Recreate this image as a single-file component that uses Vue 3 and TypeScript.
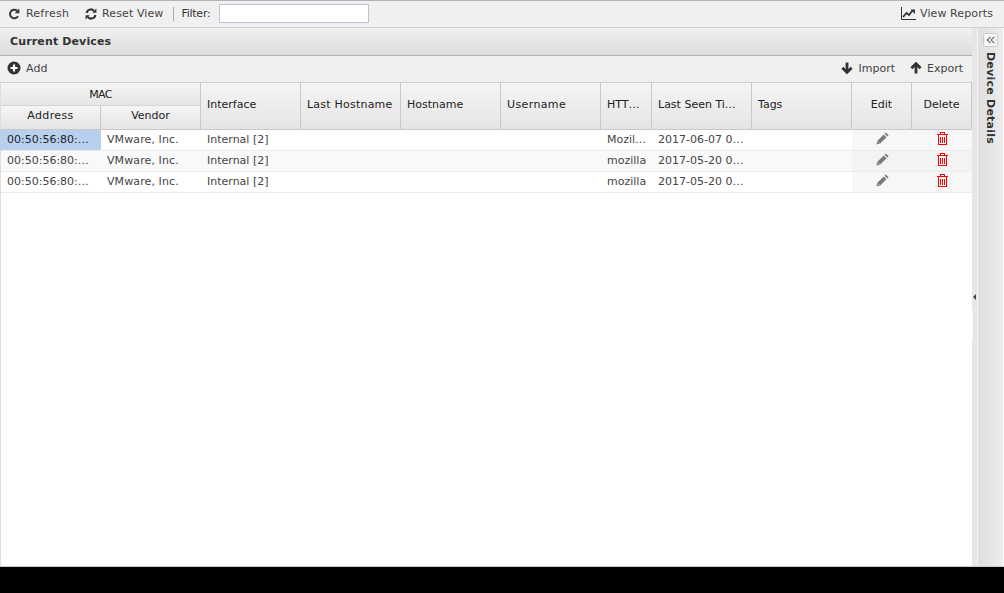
<script setup lang="ts">
interface Row { mac: string; agent: string; seen: string }
const rows: Row[] = [
  { mac: '00:50:56:80:…', agent: 'Mozil…', seen: '2017-06-07 0…' },
  { mac: '00:50:56:80:…', agent: 'mozilla', seen: '2017-05-20 0…' },
  { mac: '00:50:56:80:…', agent: 'mozilla', seen: '2017-05-20 0…' },
]
</script>

<template>
  <div class="page">
    <div class="topbar">
      <button class="tool first">
        <svg width="12" height="12" viewBox="0 0 12 12"><path d="M10 8.2A4.3 4.3 0 1 1 9.2 2.8" fill="none" stroke="#333" stroke-width="2"/><path d="M11.4 .4v4.8H6.6z" fill="#333"/></svg>
        <span class="wide-m">Refresh</span>
      </button>
      <button class="tool reset">
        <svg width="12" height="12" viewBox="0 0 12 12"><path d="M1.6 5A4.3 4.3 0 0 1 9 2.8M10.4 7A4.3 4.3 0 0 1 3 9.2" fill="none" stroke="#333" stroke-width="2"/><path d="M11.4 .6v4.2H7.2zM.6 11.4V7.2h4.2z" fill="#333"/></svg>
        <span class="wide-s">Reset View</span>
      </button>
      <i class="sep"></i>
      <label class="filter">Filter:</label>
      <input class="filter-input" />
      <button class="tool reports">
        <svg width="15" height="13" viewBox="0 0 15 13"><path d="M.5 0v12.5H15" fill="none" stroke="#333"/><path d="M2 10l3.5-4 2.5 2 3.5-4.5" fill="none" stroke="#333" stroke-width="1.8"/><path d="M9.5 2.5H14V7z" fill="#333"/></svg>
        <span class="wide-s">View Reports</span>
      </button>
    </div>

    <div class="workspace">
      <section class="main">
        <h1 class="title">Current Devices</h1>
        <div class="actions">
          <button class="tool add">
            <svg width="14" height="14" viewBox="0 0 14 14"><circle cx="7" cy="7" r="6.5" fill="#333"/><path d="M7 3.5v7M3.5 7h7" stroke="#fff" stroke-width="2.2"/></svg>
            <span class="wide-s">Add</span>
          </button>
          <button class="tool import">
            <svg width="12" height="12" viewBox="0 0 12 12"><path d="M6 .5v9.5M1.4 5.8 6 10.4l4.6-4.6" fill="none" stroke="#333" stroke-width="2.8"/></svg>
            <span>Import</span>
          </button>
          <button class="tool export">
            <svg width="12" height="12" viewBox="0 0 12 12"><path d="M6 11.5V2M1.4 6.2 6 1.6l4.6 4.6" fill="none" stroke="#333" stroke-width="2.8"/></svg>
            <span>Export</span>
          </button>
        </div>

        <div class="grid head">
          <div class="hc mac"><span class="narrow">MAC</span></div>
          <div class="hc address"><span class="wide-l">Address</span></div>
          <div class="hc vendor">Vendor</div>
          <div class="hc tall left">Interface</div>
          <div class="hc tall left"><span class="wide-m">Last Hostname</span></div>
          <div class="hc tall left">Hostname</div>
          <div class="hc tall left"><span class="wide-l">Username</span></div>
          <div class="hc tall left">HTT…</div>
          <div class="hc tall left">Last Seen Ti…</div>
          <div class="hc tall left">Tags</div>
          <div class="hc tall">Edit</div>
          <div class="hc tall">Delete</div>
        </div>

        <div v-for="(row, i) in rows" :key="i" class="grid row" :class="{ alt: i === 1 }">
          <div class="cell" :class="{ selected: i === 0 }">{{ row.mac }}</div>
          <div class="cell"><span class="wide-s">VMware, Inc.</span></div>
          <div class="cell">Internal [2]</div>
          <div class="cell"></div>
          <div class="cell"></div>
          <div class="cell"></div>
          <div class="cell">{{ row.agent }}</div>
          <div class="cell">{{ row.seen }}</div>
          <div class="cell"></div>
          <div class="cell icon">
            <svg width="13" height="13" viewBox="0 0 13 13"><path d="M9.8.4l2.8 2.8-1.3 1.3-2.8-2.8zM7.7 2.5l2.8 2.8-6.3 6.3-3.8 1 1-3.8z" fill="#7a7a7a"/><path d="M1.8 9.6l1.6 1.6" stroke="#ddd" stroke-width=".8"/></svg>
          </div>
          <div class="cell icon">
            <svg class="trash" width="11" height="13" viewBox="0 0 11 13" shape-rendering="crispEdges"><path class="trash-line" d="M0 2.5h11M3.5 2.5v-2h4v2M1.5 2.5v10h8v-10M3.5 5v5.5M5.5 5v5.5M7.5 5v5.5"/></svg>
          </div>
        </div>
      </section>

      <div class="splitter"><span class="handle"></span></div>

      <aside class="side">
        <button class="collapse">
          <svg width="9" height="8" viewBox="0 0 9 8"><path d="M4.5.8 1.3 4l3.2 3.2M8.2.8 5 4l3.2 3.2" fill="none" stroke="#666" stroke-width="1.1"/></svg>
        </button>
        <div class="side-title">Device Details</div>
      </aside>
    </div>
    <div class="footer"></div>
  </div>
</template>

<style>
html, body { margin: 0; background: #000; }
</style>

<style scoped>
.page {
  width: 1004px;
  height: 593px;
  display: flex;
  flex-direction: column;
  font: 11px "DejaVu Sans", sans-serif;
  color: #444;
  overflow: hidden;
  background: #000;
}
button { all: unset; box-sizing: border-box; }
.wide-s { letter-spacing: .1px; }
.wide-m { letter-spacing: .22px; }
.wide-l { letter-spacing: .38px; }
.narrow { letter-spacing: -.6px; }
.tool { display: flex; align-items: center; gap: 6px; color: #444; font-size: 11px; white-space: nowrap; }
.topbar {
  height: 28px;
  box-sizing: border-box;
  flex: none;
  display: flex;
  align-items: center;
  background: #f0f0f0;
  border-top: 1px solid #b8b0b0;
  border-bottom: 1px solid #cfcfcf;
  padding: 0 11px 1px 8px;
}
.reset { margin-left: 16px; gap: 5px; }
.sep { width: 1px; height: 14px; background: #aaa; margin: 0 7px 0 10px; }
.filter { color: #333; letter-spacing: -.25px; }
.filter-input {
  width: 150px;
  height: 19px;
  box-sizing: border-box;
  margin-left: 9px;
  border: 1px solid #bcc5d8;
  background: #fff;
  padding: 0;
  outline: none;
}
.reports { margin-left: auto; gap: 4px; }
.workspace { flex: none; height: 538px; display: flex; background: #fff; border-bottom: 1px solid #ccc; }
.main { width: 972px; box-sizing: border-box; background: #fff; border-left: 1px solid #ddd; }
.title {
  margin: 0 0 0 -1px;
  height: 28px;
  box-sizing: border-box;
  border-bottom: 1px solid #b8b0b0;
  background: linear-gradient(#f1f1f1, #dcdcdc);
  font-size: 11px;
  font-weight: bold;
  letter-spacing: .14px;
  color: #333;
  padding: 0 0 0 10px;
  line-height: 27px;
}
.actions {
  margin-left: -1px;
  height: 27px;
  box-sizing: border-box;
  display: flex;
  align-items: center;
  background: #f0f0f0;
  padding: 0 9px 2px 7px;
  border-bottom: 1px solid #cfcfcf;
}
.add { gap: 5px; }
.import { margin-left: auto; gap: 5px; }
.export { margin-left: 15px; gap: 5px; }
.grid {
  display: grid;
  grid-template-columns: 100px 100px 100px 100px 100px 100px 51px 100px 100px 60px 60px;
  width: 971px;
}
.head {
  grid-template-rows: 23px 23px;
  height: 47px;
  border-bottom: 1px solid #c8c8c8;
  box-sizing: border-box;
}
.hc {
  box-sizing: border-box;
  display: flex;
  align-items: center;
  justify-content: center;
  border-right: 1px solid #c8c8c8;
  background: linear-gradient(#f5f5f5, #e6e4e4);
  color: #222;
  white-space: nowrap;
  overflow: hidden;
}
.mac { grid-column: 1 / 3; grid-row: 1; border-bottom: 1px solid #d4d4d4; }
.address { grid-column: 1; grid-row: 2; padding-bottom: 4px; }
.vendor { grid-column: 2; grid-row: 2; padding-bottom: 4px; }
.tall { grid-row: 1 / 3; padding-bottom: 3px; }
.left { justify-content: flex-start; padding-left: 6px; }
.row { height: 21px; box-sizing: border-box; border-bottom: 1px solid #ececec; background: #fff; }
.row.alt { background: #f9f9f9; }
.cell {
  display: flex;
  align-items: center;
  padding: 0 0 2px 6px;
  box-sizing: border-box;
  white-space: nowrap;
  overflow: hidden;
  color: #444;
  height: 20px;
}
.selected { background: #b8d0ee; margin-left: -1px; padding-left: 7px; color: #222; }
.icon { justify-content: center; padding: 0 0 3px; background: #f7f7f7; }
.trash { margin: 0 0 0 1px; }
.trash-line { fill: none; stroke: #ff0000; stroke-width: 1; }
.row.alt .icon { background: #f3f3f3; }
.splitter {
  width: 6px;
  flex: none;
  background: #e6e6e6;
  border-right: 1px solid #f4f4f4;
  box-sizing: border-box;
  display: flex;
  align-items: center;
  justify-content: center;
  position: relative;
}
.splitter::before {
  content: "";
  position: absolute;
  left: 0;
  top: 280px;
  width: 3px;
  height: 32px;
  border: 1px solid #f2f2f2;
  border-right: 0;
  border-radius: 3px 0 0 3px;
}
.handle {
  width: 0;
  height: 0;
  border-right: 3px solid #444;
  border-top: 3px solid transparent;
  border-bottom: 3px solid transparent;
  position: relative;
}
.side {
  width: 26px;
  flex: none;
  box-sizing: border-box;
  background: linear-gradient(90deg, #dedede, #ededed);
  border-right: 1px solid #fafafa;
  display: flex;
  flex-direction: column;
  align-items: center;
  padding: 5px 1px 0 0;
}
.collapse {
  width: 15px;
  height: 14px;
  border: 1px solid #ccc;
  border-radius: 2px;
  background: #f6f6f6;
  display: flex;
  align-items: center;
  justify-content: center;
}
.side-title {
  writing-mode: vertical-rl;
  font-weight: bold;
  color: #333;
  margin-top: 5px;
  letter-spacing: .24px;
}
.footer { flex: 1; background: #000; }
</style>
